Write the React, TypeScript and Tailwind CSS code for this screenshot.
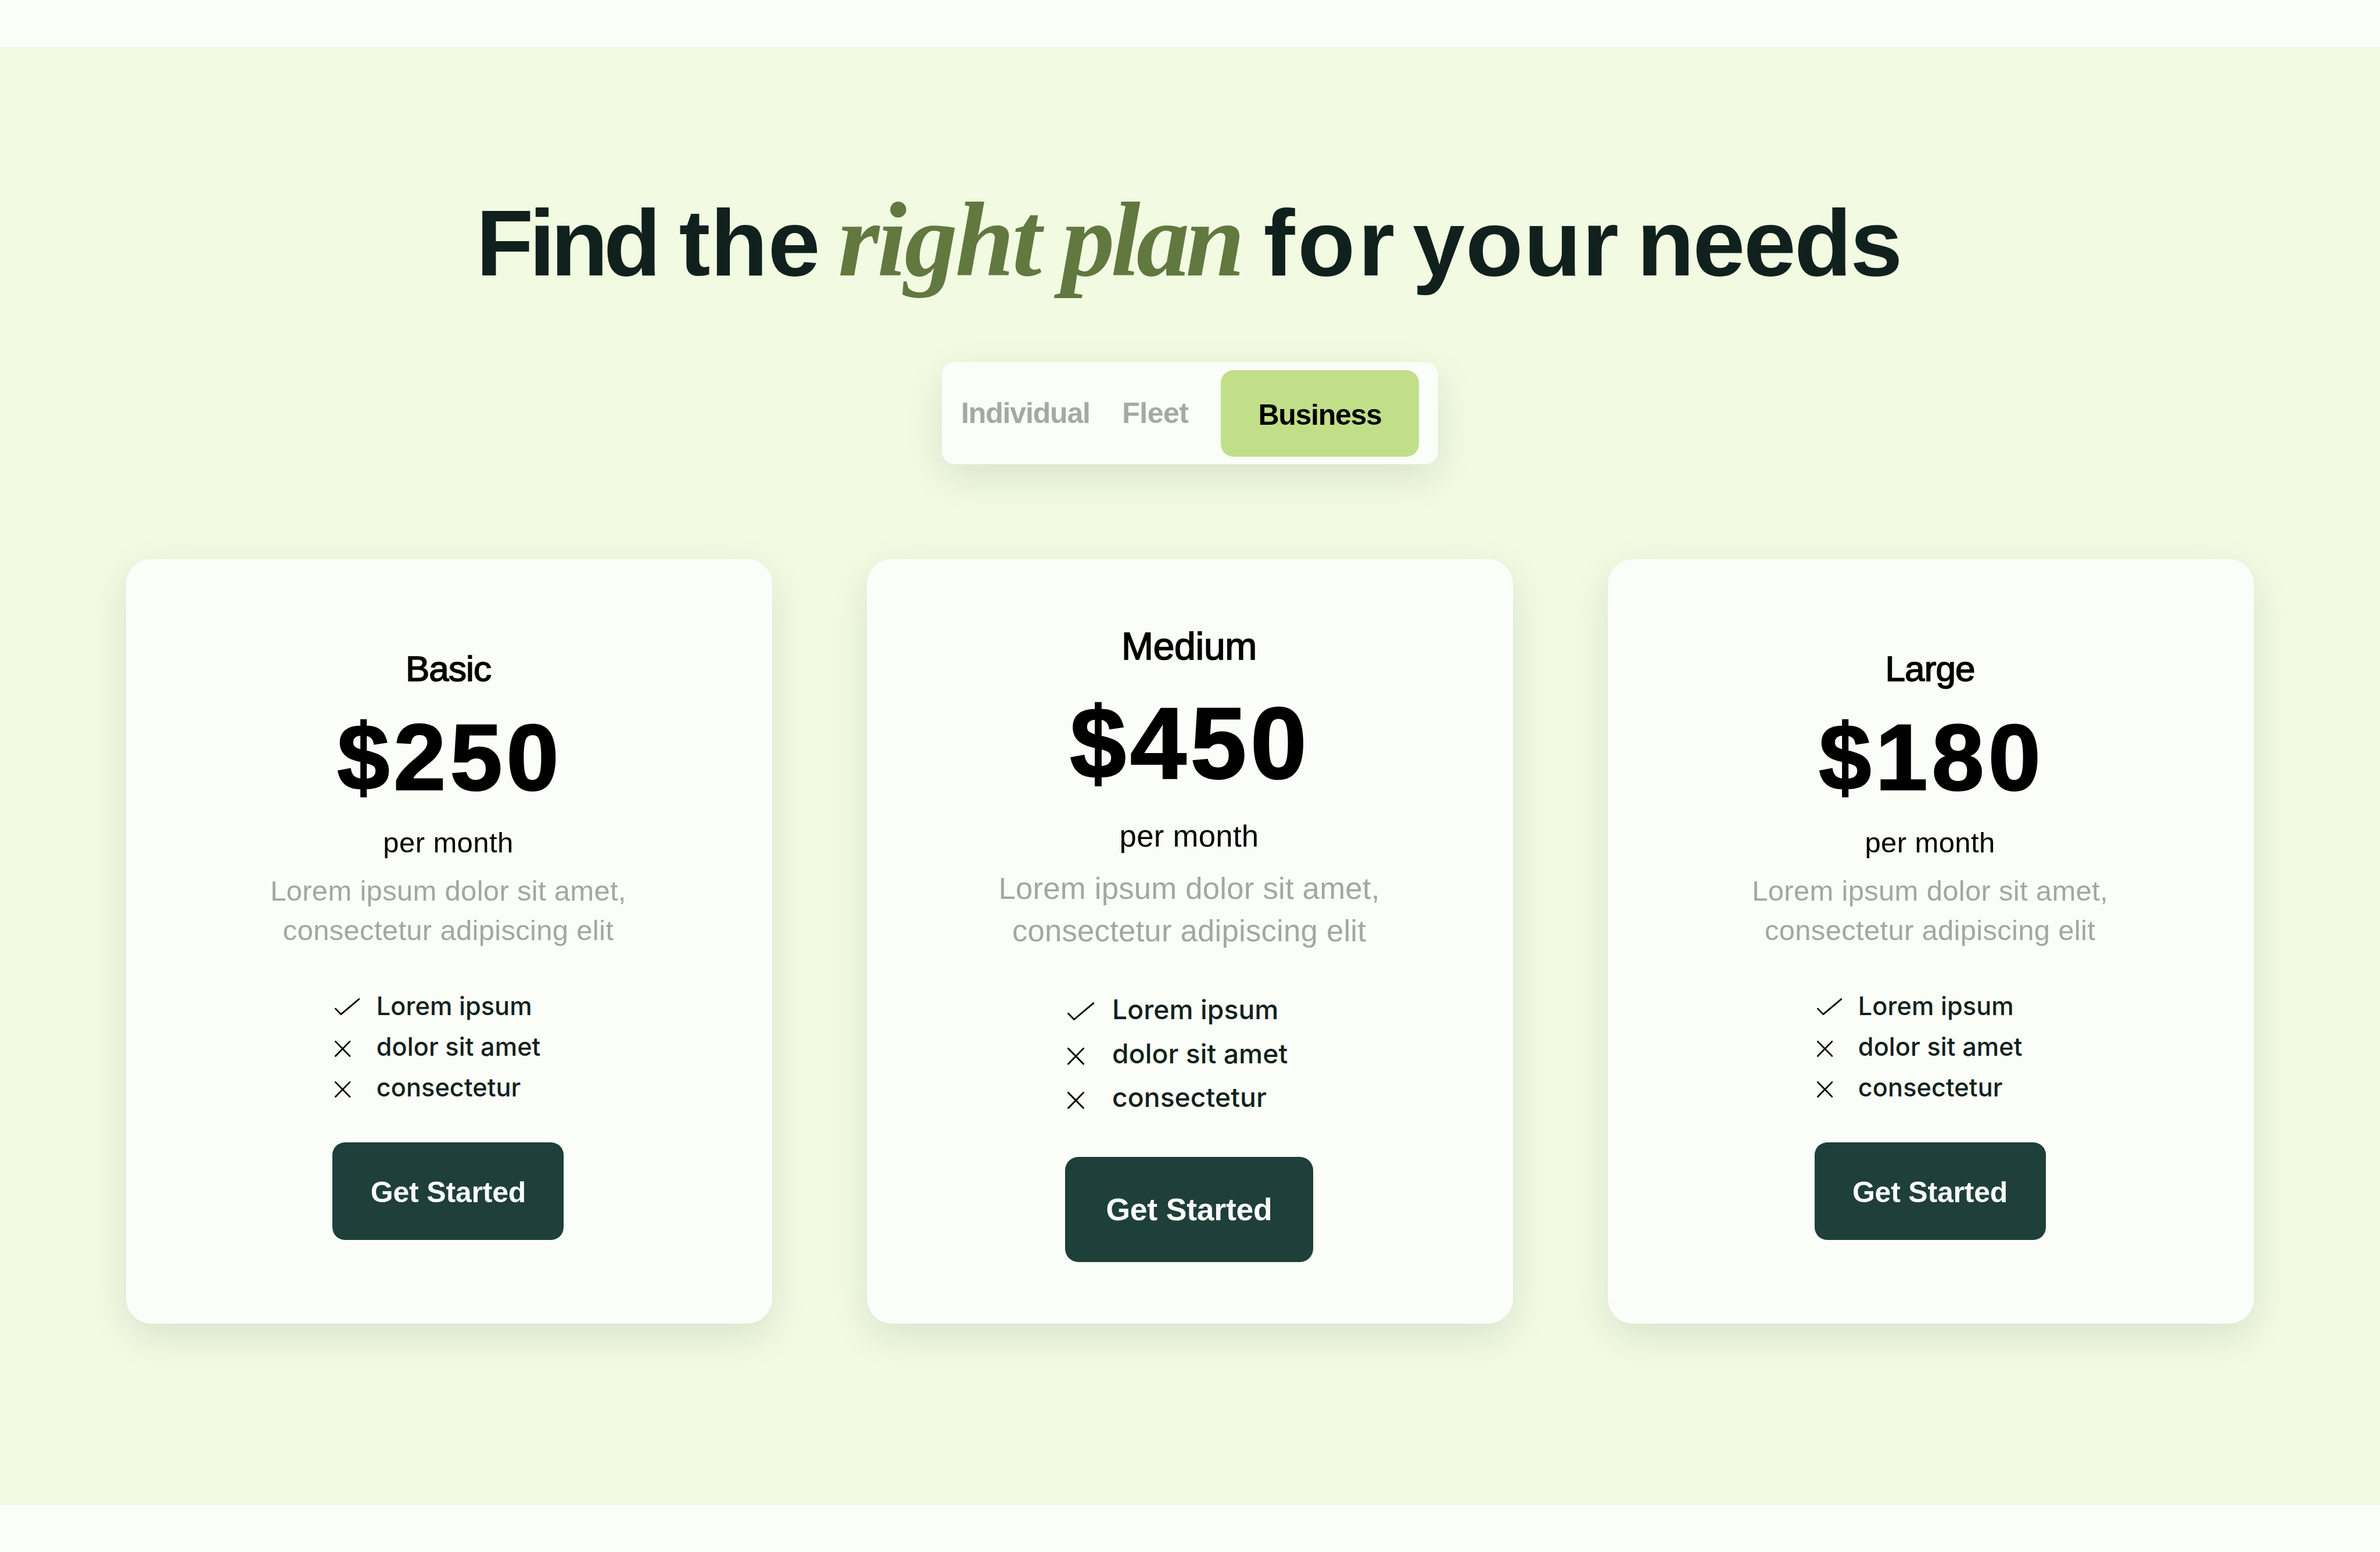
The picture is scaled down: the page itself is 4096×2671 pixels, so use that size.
type Feature = { label: string; included: boolean };

type Plan = {
  name: string;
  price: string;
  featured?: boolean;
};

const plans: Plan[] = [
  { name: "Basic", price: "$250" },
  { name: "Medium", price: "$450", featured: true },
  { name: "Large", price: "$180" },
];

const features: Feature[] = [
  { label: "Lorem ipsum", included: true },
  { label: "dolor sit amet", included: false },
  { label: "consectetur", included: false },
];

const regular = {
  card: "pt-[149px]",
  name: "text-[62px] leading-[80px] tracking-[-0.9px]",
  price: "mt-[22.3px] pl-[6px] text-[162px] leading-[180px] tracking-[7px]",
  period: "mt-[27.4px] text-[49px] leading-[60px] tracking-[0.4px]",
  description: "mt-[20.1px] text-[49px] leading-[67.6px] tracking-[0.3px]",
  list: "mt-[60px] w-[398px] text-[43.2px] leading-[70.3px] tracking-[0.1px]",
  row: "h-[70.3px]",
  iconBox: "w-[71.3px]",
  check: "mt-[3px] h-[29.1px] w-[43.4px]",
  cross: "mt-[7.4px] h-[27.8px] w-[27.4px]",
  button: "mt-[59.6px] h-[168px] w-[398px] pt-[4px] text-[50px] rounded-[21.7px]",
};

const featured: typeof regular = {
  card: "pt-[107px]",
  name: "text-[66px] leading-[86px] tracking-[-0.3px]",
  price: "mt-[29.1px] pl-[4px] text-[174px] leading-[190px] tracking-[6.8px]",
  period: "mt-[32.9px] text-[52.7px] leading-[64px] tracking-[0.3px]",
  description: "mt-[21px] text-[52.7px] leading-[73.5px] tracking-[0.22px]",
  list: "mt-[61.4px] w-[427px] text-[46.2px] leading-[75.5px] tracking-[0.1px]",
  row: "h-[75.5px]",
  iconBox: "w-[77px]",
  check: "mt-[5px] h-[31.1px] w-[46.3px]",
  cross: "mt-[9.6px] h-[29.4px] w-[29px]",
  button: "mt-[64.3px] h-[181.5px] w-[427px] pt-[2px] text-[53.5px] rounded-[23px]",
};

function CheckIcon({ className }: { className: string }) {
  return (
    <svg viewBox="0 0 64 43" className={className} fill="none" stroke="#000" strokeWidth="4" strokeLinecap="round" strokeLinejoin="round">
      <path d="M2 26.5L15.9 40.8L62 2" />
    </svg>
  );
}

function CrossIcon({ className }: { className: string }) {
  return (
    <svg viewBox="0 0 40 40.6" className={className} fill="none" stroke="#000" strokeWidth="4" strokeLinecap="round">
      <path d="M2 2L38 38.6M38 2L2 38.6" />
    </svg>
  );
}

function PlanCard({ plan }: { plan: Plan }) {
  const s = plan.featured ? featured : regular;
  return (
    <article
      className={`flex flex-1 flex-col items-center rounded-[43.3px] bg-[#fbfdf8] pr-[3px] shadow-[0_21.7px_65px_rgba(16,33,29,0.105)] ${s.card}`}
    >
      <h2 className={`text-black [-webkit-text-stroke:1.6px_#000] ${s.name}`}>{plan.name}</h2>
      <p className={`font-bold text-black [-webkit-text-stroke:2.5px_#000] ${s.price}`}>{plan.price}</p>
      <p className={`text-black ${s.period}`}>per month</p>
      <p className={`text-center text-[#a1a8a2] ${s.description}`}>
        Lorem ipsum dolor sit amet,
        <br />
        consectetur adipiscing elit
      </p>
      <ul className={`flex flex-col pl-1 font-['Inter',sans-serif] font-medium text-[#10211d] ${s.list}`}>
        {features.map((f) => (
          <li key={f.label} className={`flex items-center ${s.row}`}>
            <span className={`flex shrink-0 ${s.iconBox}`}>
              {f.included ? <CheckIcon className={s.check} /> : <CrossIcon className={s.cross} />}
            </span>
            <span className="whitespace-nowrap">{f.label}</span>
          </li>
        ))}
      </ul>
      <button className={`flex items-center justify-center bg-[#1e3f3a] font-bold tracking-[-0.2px] text-[#fbfdf8] ${s.button}`}>
        Get Started
      </button>
    </article>
  );
}

export default function App() {
  return (
    <div className="h-[2671px] w-[4096px] overflow-hidden bg-[#fbfdf8] pt-[81.3px] font-['Liberation_Sans',Arial,sans-serif]">
      <section className="flex h-[2508.5px] flex-col items-center bg-[#f2fae2] pt-[231.3px]">
        <h1 className="h-[205.5px] pr-[5px] text-[162px] leading-[200px] font-bold whitespace-nowrap text-[#10211d]">
          <span className="tracking-[-7.8px]">Find</span> <span className="ml-[-6.5px]">the</span>{" "}
          <em className="ml-[-14.4px] font-['Liberation_Serif',serif] text-[183px] text-[#61783f] italic">
            <span className="tracking-[-3.9px]">right</span> <span className="ml-[-7.7px] tracking-[-6.7px]">plan</span>
          </em>{" "}
          <span className="ml-[-6.3px] tracking-[5px]">for</span> <span className="ml-[-19.5px] tracking-[1.3px]">your</span>{" "}
          <span className="ml-[-15.2px] tracking-[-2.7px]">needs</span>
        </h1>

        <div className="mt-[105px] flex h-[176.1px] w-[853.3px] items-center gap-[55.5px] rounded-[21.7px] bg-[#fbfdf8] pl-[32.7px] text-[50px] font-bold shadow-[0_21.7px_65px_rgba(16,33,29,0.105)]">
          <button className="pt-px tracking-[-1.16px] text-[#a3aaa4]">Individual</button>
          <button className="pt-px tracking-[-0.54px] text-[#a3aaa4]">Fleet</button>
          <button className="flex h-[149px] w-[341.4px] items-center justify-center rounded-[21.7px] bg-[#c1df88] pt-[6px] tracking-[-1.3px] text-black">
            Business
          </button>
        </div>

        <div className="mt-[162.5px] flex h-[1316.6px] w-full gap-[162.5px] px-[216.7px]">
          {plans.map((plan) => (
            <PlanCard key={plan.name} plan={plan} />
          ))}
        </div>
      </section>
    </div>
  );
}
